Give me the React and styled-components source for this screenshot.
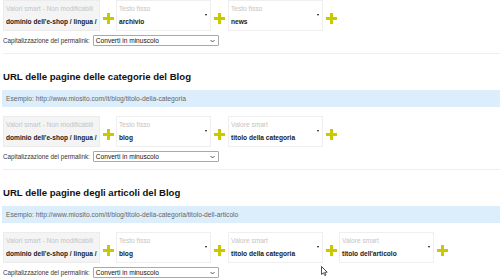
import React from "react";
import styled, { createGlobalStyle } from "styled-components";

const Global = createGlobalStyle`
  html, body { margin: 0; padding: 0; background: #fff; }
  body { font-family: "Liberation Sans", Arial, sans-serif; }
`;

const Page = styled.div`
  position: relative;
  width: 500px;
  height: 279px;
  overflow: hidden;
  padding-left: 3px;
  box-sizing: border-box;
`;

const Section = styled.section`
  display: flex;
  flex-direction: column;
`;

const Heading = styled.h2`
  margin: 17px 0 0 0;
  font-size: 9.6px;
  line-height: 11px;
  font-weight: bold;
  color: #111;
`;

const Example = styled.div`
  margin: 8px 0 0 -1px;
  height: 17px;
  display: flex;
  align-items: center;
  padding-left: 4px;
  background: #dcedfc;
  font-size: 6.7px;
  color: #666;
`;

const Row = styled.div`
  display: flex;
  align-items: flex-start;
  height: 31px;
  margin-top: ${(p) => p.$mt || 0}px;
`;

const Box = styled.div`
  width: ${(p) => p.$w}px;
  height: 31px;
  box-sizing: border-box;
  border: 1px solid ${(p) => (p.$disabled ? "#ececec" : "#efefef")};
  background: ${(p) => (p.$disabled ? "#f4f4f4" : "#fff")};
  display: flex;
  align-items: center;
  padding: 0 3px 0 2px;
`;

const BoxText = styled.div`
  flex: 1;
  align-self: stretch;
  display: flex;
  flex-direction: column;
  padding-top: 4px;
`;

const Label = styled.div`
  font-size: 6.6px;
  line-height: 8px;
  color: #c4c4c4;
  white-space: nowrap;
`;

const Value = styled.div`
  margin-top: 5px;
  font-size: 6.6px;
  line-height: 8px;
  font-weight: bold;
  color: #1a1a1a;
  white-space: nowrap;
`;

const Caret = styled.span`
  width: 0;
  height: 0;
  border-left: 1.6px solid transparent;
  border-right: 1.6px solid transparent;
  border-top: 2.2px solid #111;
  margin-top: -1px;
`;

const PlusCell = styled.div`
  width: ${(p) => p.$w}px;
  display: flex;
  justify-content: center;
  padding-top: 13px;
`;

const CapRow = styled.div`
  margin-top: 4px;
  display: flex;
  align-items: center;
  gap: 3px;
  height: 11px;
`;

const CapLabel = styled.span`
  font-size: 6.3px;
  color: #333;
  white-space: nowrap;
`;

const FakeSelect = styled.div`
  width: 126px;
  height: 11px;
  box-sizing: border-box;
  border: 1px solid #a9a9a9;
  border-radius: 1px;
  display: flex;
  align-items: center;
  justify-content: space-between;
  padding: 0 3px 0 2px;
  font-size: 6.6px;
  color: #111;
  background: #fff;
`;

const Divider = styled.div`
  margin-top: 7px;
  height: 1px;
  background: #eeeeee;
`;

const Cursor = styled.svg`
  position: absolute;
  left: 321px;
  top: 266px;
`;

const Plus = () => (
  <svg width="11" height="11" viewBox="0 0 11 11">
    <rect x="4" y="0" width="3" height="11" fill="#c9c900" />
    <rect x="0" y="4" width="11" height="3" fill="#c9c900" />
  </svg>
);

const Chevron = () => (
  <svg width="5" height="4" viewBox="0 0 5 4">
    <path d="M0.5 1 L2.5 3 L4.5 1" fill="none" stroke="#444" strokeWidth="0.9" />
  </svg>
);

const plusWidths = [16, 17, 16, 16];

function Field({ f, first }) {
  return (
    <Box $w={first ? 97 : 95} $disabled={f.disabled}>
      <BoxText>
        <Label>{f.label}</Label>
        <Value>{f.value}</Value>
      </BoxText>
      {!f.disabled && <Caret />}
    </Box>
  );
}

function FieldRow({ fields, mt }) {
  return (
    <Row $mt={mt}>
      {fields.map((f, i) => (
        <React.Fragment key={i}>
          <Field f={f} first={i === 0} />
          <PlusCell $w={plusWidths[i]}>
            <Plus />
          </PlusCell>
        </React.Fragment>
      ))}
    </Row>
  );
}

function Capitalization() {
  return (
    <CapRow>
      <CapLabel>Capitalizzazione del permalink:</CapLabel>
      <FakeSelect>
        <span>Converti in minuscolo</span>
        <Chevron />
      </FakeSelect>
    </CapRow>
  );
}

const smart = { disabled: true, label: "Valori smart - Non modificabili", value: "dominio dell'e-shop / lingua /" };

const sections = [
  {
    fields: [
      smart,
      { label: "Testo fisso", value: "archivio" },
      { label: "Testo fisso", value: "news" },
    ],
  },
  {
    title: "URL delle pagine delle categorie del Blog",
    example: "Esempio: http://www.miosito.com/it/blog/titolo-della-categoria",
    fields: [
      smart,
      { label: "Testo fisso", value: "blog" },
      { label: "Valore smart", value: "titolo della categoria" },
    ],
  },
  {
    title: "URL delle pagine degli articoli del Blog",
    example: "Esempio: http://www.miosito.com/it/blog/titolo-della-categoria/titolo-dell-articolo",
    fields: [
      smart,
      { label: "Testo fisso", value: "blog" },
      { label: "Valore smart", value: "titolo della categoria" },
      { label: "Valore smart", value: "titolo dell'articolo" },
    ],
  },
];

export default function App() {
  return (
    <>
      <Global />
      <Page>
        {sections.map((s, i) => (
          <Section key={i}>
            {s.title && <Heading>{s.title}</Heading>}
            {s.example && <Example>{s.example}</Example>}
            <FieldRow fields={s.fields} mt={s.title ? 9 : 0} />
            <Capitalization />
            {i < sections.length - 1 && <Divider />}
          </Section>
        ))}
        <Cursor width="7" height="10" viewBox="0 0 7 10">
          <path d="M0.5 0.5 L0.5 8.5 L2.4 6.8 L3.8 9.5 L5 8.9 L3.7 6.3 L6.2 6.2 Z" fill="#fff" stroke="#222" strokeWidth="0.8" />
        </Cursor>
      </Page>
    </>
  );
}
